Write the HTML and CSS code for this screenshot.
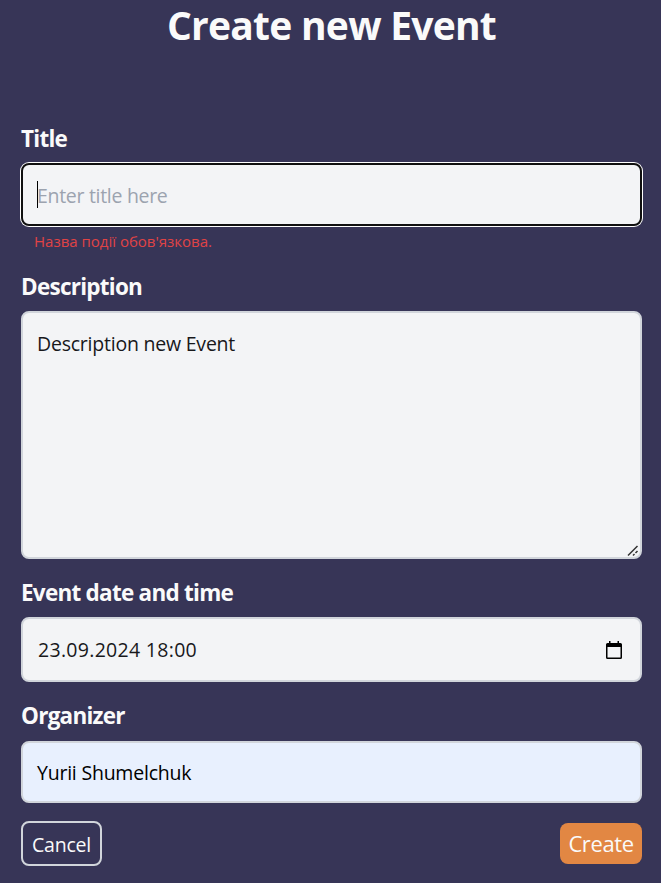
FILE: index.html
```html
<!DOCTYPE html>
<html lang="en">
<head>
<meta charset="utf-8">
<title>Create new Event</title>
<link rel="stylesheet" href="styles.css">
</head>
<body>
<form class="event-form">
  <h1 class="heading"><span>Create new Event</span></h1>
  <label class="label label-title"><span>Title</span></label>
  <div class="field field-title"><i class="caret"></i><span class="placeholder">Enter title here</span></div>
  <p class="error"><span>Назва події обов'язкова.</span></p>
  <label class="label label-description"><span>Description</span></label>
  <div class="field field-description"><span class="description-text">Description new Event</span>
    <svg class="grip" width="12" height="12" viewBox="0 0 12 12"><path d="M1 10.500 10.500 1M6 10.500l1.500-1.500M8.500 8l2-2" fill="none" stroke="#333" stroke-width="1.500"/></svg>
  </div>
  <label class="label label-date"><span>Event date and time</span></label>
  <div class="field field-date"><span class="date-text">23.09.2024 18:00</span>
    <svg class="calendar" width="16" height="18" viewBox="0 0 16 18"><path fill="#000" fill-rule="evenodd" d="M3 0h1.500v2h7V0H13v2h1.500Q16 2 16 3.500V16.500Q16 18 14.500 18h-13Q0 18 0 16.500v-13Q0 2 1.500 2H3zM1.500 6v10.500h13V6z"/></svg>
  </div>
  <label class="label label-organizer"><span>Organizer</span></label>
  <div class="field field-organizer"><span class="organizer-text">Yurii Shumelchuk</span></div>
  <div class="actions">
    <button class="cancel" type="button"><span>Cancel</span></button>
    <button class="create" type="button"><span>Create</span></button>
  </div>
</form>
</body>
</html>
```
FILE: styles.css
```css
* { box-sizing: border-box; }
body {
  margin: 0;
  height: 883px;
  overflow: hidden;
  background: #373557;
  color: #fafafa;
  font-family: "Open Sans", "Noto Sans", sans-serif;
}
.event-form { display: flex; flex-direction: column; padding: 0 19px 0 21px; }
.heading {
  margin: 0 0 75px;
  height: 50px;
  line-height: 50px;
  font-size: 39px;
  font-weight: 700;
  text-align: center;
  letter-spacing: -0.75px;
  white-space: nowrap;
}
.label {
  display: block;
  height: 28px;
  line-height: 28px;
  font-size: 22.5px;
  font-weight: 700;
  letter-spacing: -0.75px;
  white-space: nowrap;
}
.field {
  display: flex;
  align-items: center;
  border: 2px solid #d1d5db;
  border-radius: 8px;
  background: #f3f4f6;
  padding: 0 14px;
  color: #18181b;
  font-size: 19.5px;
  letter-spacing: -0.22px;
  line-height: 28px;
  white-space: nowrap;
}
.field-title {
  margin-top: 10px;
  height: 63px;
  border-color: #101010;
  box-shadow: 0 0 0 1px #fff;
}
.caret { width: 1px; height: 27px; margin-right: -1px; background: #000; }
.placeholder { color: #9ca3af; padding-top: 2px; letter-spacing: -0.3px; }
.error {
  margin: 5px 0 0 13px;
  height: 20px;
  line-height: 20px;
  font-size: 15px;
  color: #e04345;
  white-space: nowrap;
}
.label-description { margin-top: 22px; }
.field-description {
  position: relative;
  align-items: flex-start;
  margin-top: 10px;
  height: 248px;
  padding-top: 17px;
}
.grip { position: absolute; right: 1px; bottom: 0; }
.label-date { margin-top: 20px; }
.field-date { justify-content: space-between; margin-top: 10px; height: 65px; padding-right: 18px; }
.date-text { letter-spacing: 0.3px; padding: 1px 0 0 1px; }
.label-organizer { margin-top: 20px; }
.field-organizer { margin-top: 11px; height: 62px; padding-top: 1px; background: #e8f0fe; color: #000; }
.actions { display: flex; justify-content: space-between; align-items: center; margin-top: 18px; }
button {
  padding: 0;
  border-radius: 8px;
  color: #fafafa;
  font-family: inherit;
  white-space: nowrap;
}
.cancel { width: 81px; height: 45px; padding-top: 1px; border: 2px solid #d1d5db; background: transparent; font-size: 19.5px; letter-spacing: -0.2px; }
.create { width: 82px; height: 41px; padding-bottom: 1px; border: 0; background: #e28743; font-size: 22px; letter-spacing: -0.4px; }
```
